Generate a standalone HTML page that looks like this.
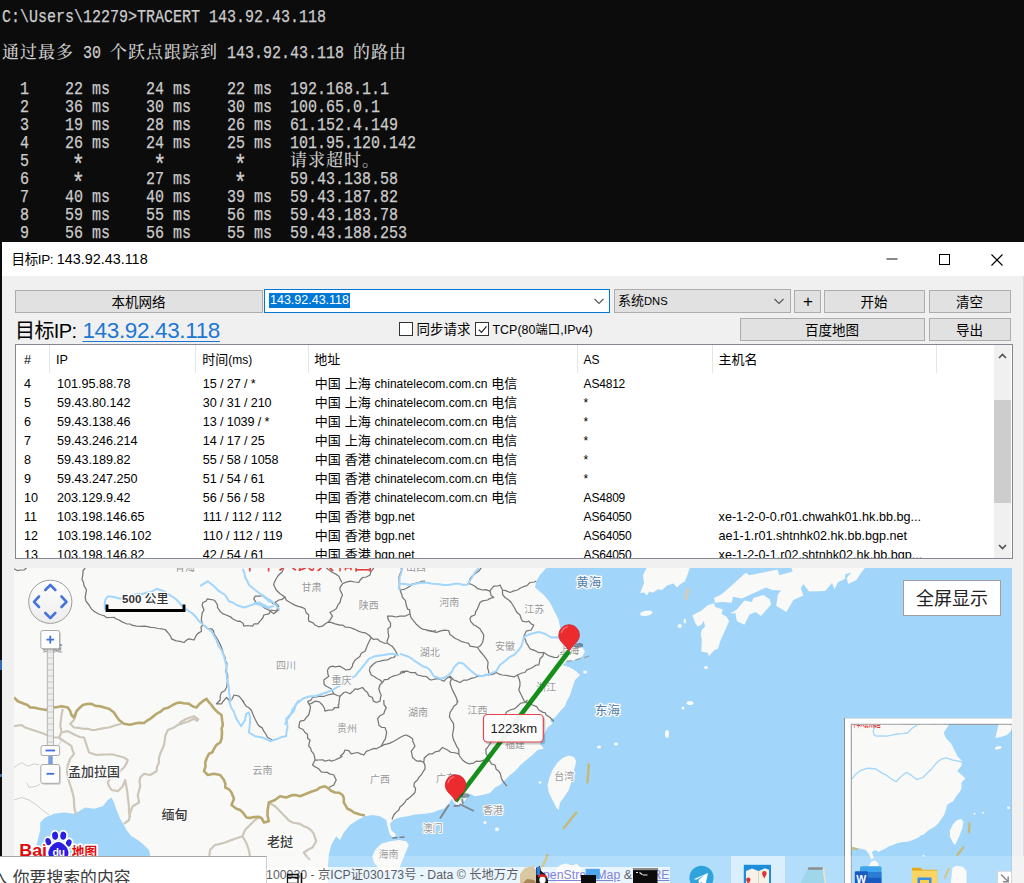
<!DOCTYPE html>
<html lang="zh-CN">
<head>
<meta charset="utf-8">
<title>目标IP: 143.92.43.118</title>
<style>
*{box-sizing:border-box;margin:0;padding:0}
html,body{width:1024px;height:883px;overflow:hidden;background:#0c0c0c}
body{position:relative;font-family:"Liberation Sans","Noto Sans CJK SC",sans-serif;color:#000}
.abs{position:absolute}
/* terminal */
#term{position:absolute;left:0;top:0;width:1024px;height:243px;background:#0c0c0c;overflow:hidden}
.tl{position:absolute;left:2px;height:18px;line-height:18px;white-space:pre;color:#cccccc;
  font-family:"Liberation Mono",monospace;font-size:19px;transform:scaleX(.78947);transform-origin:0 0;margin-top:1px;-webkit-text-stroke:.25px #ccc}
.tc{position:absolute;height:18px;line-height:18px;white-space:pre;color:#cccccc;
  font-family:"Noto Serif CJK SC","Noto Sans CJK SC",serif;font-size:17px;letter-spacing:1px;margin-top:-1px;font-weight:500}
.tl i{font-style:normal;display:inline-block;transform:translateY(4.6px) scale(1.45,1.4);transform-origin:50% 45%}
/* window */
#win{position:absolute;left:2px;top:242px;width:1022px;height:641px;background:#f0f0f0;overflow:hidden}
#tbar{position:absolute;left:0;top:0;width:1022px;height:34px;background:#fff}
#ttl{position:absolute;left:9.5px;top:7px;font-size:14.4px;line-height:20px;white-space:pre}
.btn{position:absolute;background:#e1e1e1;border:1px solid #adadad;text-align:center;font-size:13.5px;white-space:pre}
.btn{padding-top:2.4px;padding-right:1px}
#lv{position:absolute;left:13px;top:102px;width:998px;height:215px;border:1px solid #828790;background:#fff;overflow:hidden}
.hd{position:absolute;top:1px;height:28px;line-height:28px;font-size:12.6px;white-space:pre}
.sep{position:absolute;top:0;width:1px;height:28px;background:#e5e5e5}
.row{position:absolute;left:0;height:19px;line-height:19px;font-size:12.6px;width:976px;white-space:pre}
.row span{position:absolute;top:0}
.row .ad{font-size:12px;word-spacing:.6px;top:-1px}.row .ad b{font-weight:normal;font-size:13px}
.row .tm{letter-spacing:-.1px}.row .as{font-size:12px;letter-spacing:-.2px}
</style>
</head>
<body>
<div id="term">
<div class="tl" style="top:7px">C:\Users\12279&gt;TRACERT 143.92.43.118</div>
<div class="tl" style="top:43px">         30              143.92.43.118</div>
<div class="tl" style="top:79px">  1    22 ms    24 ms    22 ms  192.168.1.1</div>
<div class="tl" style="top:97px">  2    36 ms    30 ms    30 ms  100.65.0.1</div>
<div class="tl" style="top:115px">  3    19 ms    28 ms    26 ms  61.152.4.149</div>
<div class="tl" style="top:133px">  4    26 ms    24 ms    25 ms  101.95.120.142</div>
<div class="tl" style="top:151px">  5     <i>*</i>        <i>*</i>        <i>*</i></div>
<div class="tl" style="top:169px">  6     <i>*</i>       27 ms     <i>*</i>     59.43.138.58</div>
<div class="tl" style="top:187px">  7    40 ms    40 ms    39 ms  59.43.187.82</div>
<div class="tl" style="top:205px">  8    59 ms    55 ms    56 ms  59.43.183.78</div>
<div class="tl" style="top:223px">  9    56 ms    56 ms    55 ms  59.43.188.253</div>
<div class="tc" style="top:43px;left:2px">通过最多</div>
<div class="tc" style="top:43px;left:110px">个跃点跟踪到</div>
<div class="tc" style="top:43px;left:353px">的路由</div>
<div class="tc" style="top:151px;left:290px">请求超时。</div>
</div>

<div id="win">
 <div id="tbar">
  <div id="ttl"><span style="font-size:13.5px;letter-spacing:-.35px">目标IP: </span>143.92.43.118</div>
  <svg class="abs" style="left:860px;top:0" width="162" height="34" viewBox="0 0 162 34">
   <path d="M24.5 17h11" stroke="#111" stroke-width="1" fill="none"/>
   <rect x="77.5" y="12.5" width="10" height="10" stroke="#000" stroke-width="1" fill="none"/>
   <path d="M129.5 12.5l11 11M140.5 12.5l-11 11" stroke="#000" stroke-width="1.1" fill="none"/>
  </svg>
 </div>

 <!-- toolbar row 1 -->
 <div class="btn" style="left:13px;top:48px;width:248px;height:23px;line-height:20px">本机网络</div>
 <div class="abs" style="left:262px;top:47px;width:346px;height:24px;background:#fff;border:1px solid #0078d7"></div>
 <div class="abs" style="left:267px;top:50.5px;width:81px;height:15px;background:#0078d7;color:#fff;font-size:12.5px;line-height:15px;white-space:pre;padding-left:1px">143.92.43.118</div>
 <svg class="abs" style="left:590px;top:54px" width="14" height="10" viewBox="0 0 14 10"><path d="M2.5 3l4.5 4.5 4.5-4.5" stroke="#555" stroke-width="1.1" fill="none"/></svg>
 <div class="abs" style="left:612px;top:47px;width:177px;height:24px;background:#e1e1e1;border:1px solid #adadad;font-size:13px;line-height:22px;padding-left:3px;white-space:pre">系统<span style="font-size:11.2px">DNS</span></div>
 <svg class="abs" style="left:770px;top:54px" width="14" height="10" viewBox="0 0 14 10"><path d="M2.5 3l4.5 4.5 4.5-4.5" stroke="#555" stroke-width="1.1" fill="none"/></svg>
 <div class="btn" style="left:792px;top:48px;width:27px;height:23px;line-height:17px;font-size:17px;padding-left:2px">+</div>
 <div class="btn" style="left:822px;top:48px;width:101px;height:23px;line-height:20px">开始</div>
 <div class="btn" style="left:927px;top:48px;width:82px;height:23px;line-height:20px">清空</div>

 <!-- toolbar row 2 -->
 <div class="abs" style="left:13px;top:75px;height:28px;line-height:28px;font-size:22.5px;white-space:pre"><span style="font-size:20px;letter-spacing:-.6px">目标IP: </span><span style="color:#1c77d3;text-decoration:underline;text-decoration-thickness:1.3px;text-underline-offset:2.5px;letter-spacing:-.36px;margin-left:1px">143.92.43.118</span></div>
 <div class="abs" style="left:397px;top:80px;width:14px;height:14px;background:#fff;border:1px solid #333"></div>
 <div class="abs" style="left:414.5px;top:78px;font-size:13.5px;line-height:20px;white-space:pre">同步请求</div>
 <div class="abs" style="left:473px;top:80px;width:14px;height:14px;background:#fff;border:1px solid #333"></div>
 <svg class="abs" style="left:473.5px;top:80.5px" width="13" height="13" viewBox="0 0 13 13"><path d="M2.8 6.6l2.7 2.8 5-6" stroke="#222" stroke-width="1.2" fill="none"/></svg>
 <div class="abs" style="left:490.5px;top:78px;font-size:12.45px;line-height:20px;white-space:pre">TCP(80端口,IPv4)</div>
 <div class="btn" style="left:738px;top:76px;width:185px;height:23px;line-height:20px">百度地图</div>
 <div class="btn" style="left:927px;top:76px;width:82px;height:23px;line-height:20px">导出</div>

 <!-- list view -->
 <div id="lv">
  <div class="hd" style="left:8px">#</div>
  <div class="hd" style="left:40px">IP</div>
  <div class="hd" style="left:186.2px;font-size:13px">时间<span style="font-size:12px">(ms)</span></div>
  <div class="hd" style="left:298.2px;font-size:13px">地址</div>
  <div class="hd" style="left:567.6px;font-size:12px">AS</div>
  <div class="hd" style="left:702.5px;font-size:13px">主机名</div>
  <div class="sep" style="left:33px"></div><div class="sep" style="left:179px"></div><div class="sep" style="left:292px"></div>
  <div class="sep" style="left:561px"></div><div class="sep" style="left:696px"></div><div class="sep" style="left:920px"></div>
<div class="row" style="top:30px"><span style="left:8px">4</span><span style="left:41px">101.95.88.78</span><span class="tm" style="left:186.8px">15 / 27 / *</span><span class="ad" style="left:298.7px"><b>中国</b> <b>上海</b> chinatelecom.com.cn <b>电信</b></span><span class="as" style="left:567.6px">AS4812</span></div>
<div class="row" style="top:49px"><span style="left:8px">5</span><span style="left:41px">59.43.80.142</span><span class="tm" style="left:186.8px">30 / 31 / 210</span><span class="ad" style="left:298.7px"><b>中国</b> <b>上海</b> chinatelecom.com.cn <b>电信</b></span><span class="as" style="left:567.6px">*</span></div>
<div class="row" style="top:68px"><span style="left:8px">6</span><span style="left:41px">59.43.138.46</span><span class="tm" style="left:186.8px">13 / 1039 / *</span><span class="ad" style="left:298.7px"><b>中国</b> <b>上海</b> chinatelecom.com.cn <b>电信</b></span><span class="as" style="left:567.6px">*</span></div>
<div class="row" style="top:87px"><span style="left:8px">7</span><span style="left:41px">59.43.246.214</span><span class="tm" style="left:186.8px">14 / 17 / 25</span><span class="ad" style="left:298.7px"><b>中国</b> <b>上海</b> chinatelecom.com.cn <b>电信</b></span><span class="as" style="left:567.6px">*</span></div>
<div class="row" style="top:106px"><span style="left:8px">8</span><span style="left:41px">59.43.189.82</span><span class="tm" style="left:186.8px">55 / 58 / 1058</span><span class="ad" style="left:298.7px"><b>中国</b> <b>香港</b> chinatelecom.com.cn <b>电信</b></span><span class="as" style="left:567.6px">*</span></div>
<div class="row" style="top:125px"><span style="left:8px">9</span><span style="left:41px">59.43.247.250</span><span class="tm" style="left:186.8px">51 / 54 / 61</span><span class="ad" style="left:298.7px"><b>中国</b> <b>香港</b> chinatelecom.com.cn <b>电信</b></span><span class="as" style="left:567.6px">*</span></div>
<div class="row" style="top:144px"><span style="left:8px">10</span><span style="left:41px">203.129.9.42</span><span class="tm" style="left:186.8px">56 / 56 / 58</span><span class="ad" style="left:298.7px"><b>中国</b> <b>香港</b> chinatelecom.com.cn <b>电信</b></span><span class="as" style="left:567.6px">AS4809</span></div>
<div class="row" style="top:163px"><span style="left:8px">11</span><span style="left:41px">103.198.146.65</span><span class="tm" style="left:186.8px">111 / 112 / 112</span><span class="ad" style="left:298.7px"><b>中国</b> <b>香港</b> bgp.net</span><span class="as" style="left:567.6px">AS64050</span><span style="left:702.6px">xe-1-2-0-0.r01.chwahk01.hk.bb.bg...</span></div>
<div class="row" style="top:182px"><span style="left:8px">12</span><span style="left:41px">103.198.146.102</span><span class="tm" style="left:186.8px">110 / 112 / 119</span><span class="ad" style="left:298.7px"><b>中国</b> <b>香港</b> bgp.net</span><span class="as" style="left:567.6px">AS64050</span><span style="left:702.6px">ae1-1.r01.shtnhk02.hk.bb.bgp.net</span></div>
<div class="row" style="top:201px"><span style="left:8px">13</span><span style="left:41px">103.198.146.82</span><span class="tm" style="left:186.8px">42 / 54 / 61</span><span class="ad" style="left:298.7px"><b>中国</b> <b>香港</b> bgp.net</span><span class="as" style="left:567.6px">AS64050</span><span style="left:702.6px">xe-1-2-0-1.r02.shtnhk02.hk.bb.bgp...</span></div>
  <!-- scrollbar -->
  <div class="abs" style="left:977px;top:0;width:19px;height:213px;background:#fff"></div>
  <div class="abs" style="left:978px;top:0;width:17px;height:213px;background:#f0f0f0"></div>
  <div class="abs" style="left:978px;top:55px;width:17px;height:103px;background:#cdcdcd"></div>
  <svg class="abs" style="left:978px;top:3px" width="17" height="17" viewBox="0 0 17 17"><path d="M5 10l3.5-3.5 3.5 3.5" stroke="#505050" stroke-width="1.6" fill="none"/></svg>
  <svg class="abs" style="left:978px;top:193px" width="17" height="17" viewBox="0 0 17 17"><path d="M5 7l3.5 3.5 3.5-3.5" stroke="#505050" stroke-width="1.6" fill="none"/></svg>
 </div>

 <!-- map -->
 <div id="map" class="abs" style="left:12px;top:326px;width:998px;height:315px;overflow:hidden;background:#a1d6fa">
<svg class="abs" style="left:0;top:0" width="998" height="315" viewBox="14 568 998 315" font-family="'Liberation Sans','Noto Sans CJK SC',sans-serif">
<rect x="14" y="568" width="998" height="315" fill="#a1d6fa"/>
<path d="M14 568 L546.2 568 L540 575 L536.2 581.2 L535 587.5 L543.8 595 L550 602.5 L555 612.5 L558.8 620 L560 627.5 L563.8 633.8 L570 640 L575 645 L581.2 646.2 L585 651.2 L582.5 656.2 L575 660 L567.5 661.2 L562.5 665 L570 667.5 L576.2 671.2 L580 675 L575 680 L572.5 687.5 L570 695 L566.2 702.5 L565 706.2 L560 711.2 L555 717.5 L550 720 L552.5 723.8 L547.5 727.5 L543.8 735 L540 743.8 L543.8 748.8 L537.5 750 L532.5 755 L526.2 760 L520 765.5 L515 771.2 L510 775 L505 780 L500 785 L495 787.5 L490 793 L482.5 795 L475 796.2 L470 793.8 L466.2 798.8 L462.5 803.8 L457.5 805 L453.8 802.5 L451.8 798.8 L449.5 802.5 L447.5 805.5 L443.8 808.8 L438.8 810 L432.5 812.5 L425 813.8 L415 814.5 L407.5 816.2 L400 817.5 L393.8 819.5 L390 823.8 L391.2 830 L396.2 835 L393.8 837.5 L390 835 L387.5 826.2 L386.2 820 L380 816.2 L372.5 815 L365 816.2 L357.5 820 L350 825 L343.8 832.5 L340 840 L336.2 836.2 L331.2 845 L328.8 855 L328 865 L328 890 L14 900Z" fill="#f9f9f8"/>
<path d="M32.8 900 L35.2 850 L37.8 840 L40.2 830 L40.2 822.5 L45.2 817.5 L54 813.8 L64 812.5 L74 813.8 L79 811.2 L85.2 807.5 L94 808.8 L102.8 806.2 L107.8 800 L111.5 797.5 L114 802.5 L116.5 810 L120.2 818.8 L124 825 L126.5 830 L131.5 836.2 L137.8 840 L144 845 L149 850 L150.2 855 L149 900Z" fill="#a1d6fa"/>
<path d="M375 850 L381.2 843.8 L390 841.2 L398.8 840 L406.2 841.2 L408.8 845 L406.2 851.2 L402.5 860 L398.8 870 L382.5 872.5 L373.8 862.5 L372.5 856.2Z" fill="#f9f9f8"/>
<path d="M568.8 755.5 L573.8 757 L576.2 761.2 L574.5 768.8 L572.5 775 L571.2 782.5 L568.8 790 L563.8 797.5 L560 802.5 L558.8 810 L556.2 807.5 L552.5 800 L548.8 792.5 L547.5 785 L549.5 777.5 L552.5 770 L557.5 762.5 L562.5 758Z" fill="#f9f9f8"/>
<path d="M646.7 567.9 L642.9 575.2 L644.1 582.9 L641.6 589.2 L640.3 593 L644.1 592.5 L646.7 595.6 L649.2 591.7 L653 592.5 L658.1 589.2 L661.9 590 L667 585.4 L673.3 583.4 L677.1 587.4 L680.4 584.1 L684.8 581.6 L687.3 575.2 L689.8 567.9Z" fill="#f9f9f8"/>
<ellipse cx="646.2" cy="613.3" rx="6.3" ry="2.6" fill="#f9f9f8" transform="rotate(-10 646 613)"/>
<path d="M714 603.2 L707.6 605.2 L701.3 610.8 L696.2 613.3 L692.4 615.4 L694.9 622.2 L697.5 626.5 L701.3 624.8 L703.8 620.9 L705.1 626.5 L701.8 629.8 L700.8 634.9 L701.8 639.2 L701.3 651.4 L707.6 652.7 L708.9 656 L714.5 650.1 L717.8 648.9 L720.3 641.3 L724.1 632.4 L729.2 620.9 L726.7 617.1 L721.6 613.8 L722.8 609.5 L715.2 607Z" fill="#f9f9f8"/>
<path d="M714 598.1 L721.6 594.3 L731.7 585.4 L745.7 572.7 L749.5 575.2 L777.4 569.6 L779.5 575.2 L792.7 571.4 L791.4 567.9 L865 567.9 L861.2 572.7 L856.2 580.3 L848 584.1 L846.8 577.8 L851.1 572.7 L845.5 574 L844.7 579 L837.9 582.3 L834.6 589.2 L832 582.9 L825.2 591 L809.2 591.5 L803.3 584.1 L800.8 587.9 L803.3 595.6 L793.4 600.1 L786.3 612.1 L776.2 605.7 L777.9 594.3 L781.2 590.5 L772.4 590 L766 587.4 L758.4 591 L741.9 598.6 L733 596.8 L731.7 602.7 L722.8 601.9 L715.2 602.7Z" fill="#f9f9f8"/>
<path d="M730.5 613.3 L736.8 609.5 L744.4 600.6 L752 601.9 L753.3 598.1 L763.5 595 L769.8 599.4 L771.1 604.4 L760.9 615.9 L755.9 612.1 L749.5 614.6 L744.4 624.8 L736.8 620.9 L735.5 613.3Z" fill="#f9f9f8"/>
<ellipse cx="679.7" cy="626" rx="2" ry="2" fill="#f9f9f8"/>
<ellipse cx="684.8" cy="621" rx="1.25" ry="2.5" fill="#f9f9f8"/>
<ellipse cx="706" cy="667.5" rx="2" ry="1.5" fill="#f9f9f8"/>
<ellipse cx="690" cy="703" rx="3.5" ry="2" fill="#f9f9f8"/>
<ellipse cx="683" cy="708" rx="1.5" ry="1.5" fill="#f9f9f8"/>
<ellipse cx="667" cy="734" rx="2" ry="4" fill="#f9f9f8"/>
<ellipse cx="599" cy="747" rx="2" ry="1.5" fill="#f9f9f8"/>
<ellipse cx="616" cy="744" rx="2" ry="1.5" fill="#f9f9f8"/>
<ellipse cx="485" cy="822.5" rx="1.5" ry="1.5" fill="#f9f9f8"/>
<ellipse cx="497" cy="829.3" rx="2" ry="2" fill="#f9f9f8"/>
<ellipse cx="585" cy="672" rx="2" ry="1.5" fill="#f9f9f8"/>
<ellipse cx="540" cy="782.5" rx="1.25" ry="1.25" fill="#f9f9f8"/>
<rect x="685" y="588" width="3.5" height="12" fill="#cfcdbd" transform="rotate(14 686.5 594)"/>
<path d="M14 767.5 L21.5 762.5 L27.8 766.2 L34 763.8 L39 765" fill="none" stroke="#cfcfcf" stroke-width="1"/>
<path d="M26.5 782.5 L29 787.5 L36.5 786.2 L40.2 783.8" fill="none" stroke="#cfcfcf" stroke-width="1"/>
<path d="M14 800 L21.5 797.5 L29 800 L36.5 805 L44 811.2 L49 815" fill="none" stroke="#cfcfcf" stroke-width="1"/>
<path d="M57.8 737.5 L61.5 741.2 L57.8 746.2" fill="none" stroke="#cfcfcf" stroke-width="1"/>
<path d="M197.8 721.2 L194 718.8 L189 721.2 L181.5 723.8 L177.5 725.1 L174 727.5 L167.8 730 L165.2 736.2 L164.8 739.9 L164 745 L162.2 749.2 L160.2 753.8 L158.9 758.2 L159 762.5 L157 766.7 L156.5 771.2 L150.2 775 L144 773.8 L140.2 777.5 L139.5 781.2 L140.2 786.2 L138.9 791.1 L137.8 795 L139 802.5 L132.8 806.2 L130.2 812.5 L129 820 L124 823.8" fill="none" stroke="#cdc7ba" stroke-width="2.2" stroke-linejoin="round"/>
<path d="M61.5 732.5 L67.8 731.2 L70.9 732.7 L75.2 735 L79.8 737 L84 737.5 L86.5 745 L89 752.5 L96.5 755 L101.6 754.6 L106.5 754.5 L112.3 754.3 L116.5 755.5 L124 757.5 L127.8 760 L126.5 763.4 L124 767.5 L120.3 770.6 L117.8 775 L113.7 776.8 L110.2 777.5 L107.8 782.5 L109.1 786.4 L111.5 790 L117.8 791.2 L122.8 786.2 L125.2 780 L126.5 787.5 L127.4 792.3 L127.8 797.5 L128.5 801.8 L129 807.5 L128.9 812 L130.2 817.5" fill="none" stroke="#cdc7ba" stroke-width="2.2" stroke-linejoin="round"/>
<path d="M61.5 732.5 L59 737.5 L64 741.2 L68 743.6 L71.5 746.2 L72.5 750.1 L74 753.8 L70.2 758.8 L67.8 765 L67 771.2 L67.8 777.5 L70.2 785 L71.4 789.1 L72.8 793.8 L73.9 798.5 L74 802.5 L74.2 807 L75.2 811.2 L76 815" fill="none" stroke="#cdc7ba" stroke-width="2.2" stroke-linejoin="round"/>
<path d="M61.5 732.5 L60.2 725 L60.9 720.6 L61.5 715 L62.8 708.8" fill="none" stroke="#cdc7ba" stroke-width="2.2" stroke-linejoin="round"/>
<path d="M76.5 712.5 L74 720 L70.2 723.8 L74 727.5 L78.8 727.8 L82.8 728.8 L87.9 728.8 L91.5 730 L95.7 729.8 L100.2 728.8 L104 728.1 L109 727.5 L116.5 725 L121.5 723.8" fill="none" stroke="#cdc7ba" stroke-width="2.2" stroke-linejoin="round"/>
<path d="M14 726.2 L21.5 725 L24.5 727.2 L29 728.8 L36.5 731.2 L44 733.8 L48.2 735.8 L51.5 737.5 L59 737.5" fill="none" stroke="#cdc7ba" stroke-width="2.2" stroke-linejoin="round"/>
<path d="M260 816.2 L255 820 L250 825 L245 830 L242.5 836.2 L235 838.8 L230.6 840.4 L225 842.5 L220.3 843.9 L215 845 L210 850 L209.5 854.9 L208.8 860" fill="none" stroke="#cdc7ba" stroke-width="2.2" stroke-linejoin="round"/>
<path d="M242.5 836.2 L246.2 842.5 L248.8 850 L249.9 855.7 L250 860" fill="none" stroke="#cdc7ba" stroke-width="2.2" stroke-linejoin="round"/>
<path d="M268.8 802.5 L275 806.2 L280 811.2 L283.1 814.6 L286.2 817.5 L288.6 820.3 L292.5 822.5 L300 823.8 L304 826.4 L307.5 827.5 L311.2 830.3 L313.8 833.8 L316.2 841.2 L312.5 847.5 L307.5 850 L303.8 852.5 L306.7 856.5 L310 860" fill="none" stroke="#cdc7ba" stroke-width="2.2" stroke-linejoin="round"/>
<path d="M199 720 L194 716.2 L186.5 718.8 L182 721.2 L179 723.8" fill="none" stroke="#cdc7ba" stroke-width="2.2" stroke-linejoin="round"/>
<path d="M85.2 568 L83.1 570.5 L82.8 575 L82 579.4 L83.5 582.5 L84 585.6 L86.5 590 L85.6 594.7 L85.2 597.5 L86 601.1 L89 605 L91.6 609.1 L94 611.2 L98.6 614 L101.5 615 L103.8 615.6 L106.9 617.7 L110.2 617.5 L114.3 617.4 L115.2 618.5 L119 620 L122.1 621.9 L126.5 623.8 L130.1 624 L131.9 625.2 L136.5 626.2 L140.5 626.4 L145.2 626.2 L150.8 627.3 L154 627.5 L157.8 628.5 L161.5 628.8 L165.1 629.5 L167.8 632.5 L170.7 636.4 L171.5 638.8 L176.2 640.8 L179 641.2 L184 642.5 L186.2 640.4 L189 638.8 L194 640 L196.5 635 L198 633.4 L201.5 631.2 L201 627 L202.8 625 L201.4 620.4 L201.5 617.5 L202.3 612.6 L204 610 L202.1 605.3 L202.8 602.5" fill="none" stroke="#777777" stroke-width="1.25" stroke-linejoin="round"/>
<path d="M202.8 625 L204.7 625.9 L207.4 628.5 L211.5 628.8 L213.5 630.8 L214.2 634.2 L216.5 637.5 L217.8 639.9 L220.7 645.4 L221.5 647.5 L222.6 650.8 L222.9 653.1 L225.2 657.5 L225.2 660.2 L226.9 663.3 L226.5 667.5 L225.7 672 L227.4 673.2 L227.8 677.5 L227.5 679.6 L227 685.4 L226.5 687.5 L224.9 690.5 L221.5 692.5 L220.2 695.9 L220.2 700 L216.5 703.8 L221.5 703.8 L223.1 701.4 L226.5 697.5 L230.2 701.2 L232.2 698.8 L234 695 L239 696.2 L241.1 698.6 L244 702.5" fill="none" stroke="#777777" stroke-width="1.25" stroke-linejoin="round"/>
<path d="M14 568.8 L17.9 570.7 L20.2 570 L24.3 569.8 L26.5 568" fill="none" stroke="#777777" stroke-width="1.25" stroke-linejoin="round"/>
<path d="M202.5 602.5 L205.8 601.3 L207.5 598.8 L209.9 599.4 L213.8 600 L215.3 601.3 L217.5 605 L217.5 607.5 L220 611.2 L222.5 613.6 L226.2 615 L230.5 616.8 L232.5 618.8 L237.4 621.3 L240 621.2 L243.1 623.3 L243.8 626.2 L247.4 625.5 L252.5 626.2 L254.2 623.8 L257.8 623.9 L260 621.2 L262.8 618 L263.8 615 L268.8 613.8 L271.2 610 L276.2 611.2 L278.8 606.2 L275 602.5 L278.8 600 L282.3 599.3 L285 597 L286.4 600.2 L290 602.5 L294.8 605.1 L297.5 606.2 L301.9 607.4 L305 608.8 L306.1 612.7 L308.8 615 L308.4 618.9 L308.8 621.2 L313.1 622.8 L315 625 L318.5 626.8 L322.5 626.2 L325.6 623.5 L327.5 622.5 L330.3 622.2 L335 623.8 L339.8 625.2 L342.5 625 L345.3 627.1 L350 627.5 L354.3 629.2 L356.2 630 L359 631.4 L362.5 632.5 L364.7 632.5 L368.8 635 L371.2 637.5" fill="none" stroke="#777777" stroke-width="1.25" stroke-linejoin="round"/>
<path d="M255 596.2 L260 596.2 L262.5 595.5 L266.3 598.9 L270 600 L272.9 603.5 L276.2 605 L278.8 610 L277.1 611.1 L273.8 613.8 L270.7 611.4 L268.8 610 L265 608.3 L262.5 606.2 L258.7 604.1 L256.2 602.5 L253.8 598.8 L255 596.2" fill="none" stroke="#777777" stroke-width="1.25" stroke-linejoin="round"/>
<path d="M285 597 L280 593.8 L276.2 590 L273.8 585 L274 583 L276.2 578.8 L277.7 576.2 L280 573.8 L282.1 572 L283.8 568" fill="none" stroke="#777777" stroke-width="1.25" stroke-linejoin="round"/>
<path d="M327.5 622.5 L329.8 620.4 L332.5 616.2 L330 612.5 L333.1 610.7 L336.2 608.8 L338.2 604.4 L340 602.5 L341.1 597.9 L342.5 595 L340 590 L340 587.7 L342.5 583.8 L345.4 582.4 L350 581.2 L355 582 L358.8 582.5 L360.2 580 L362.5 577.5 L366.4 577 L370 575 L370.9 571.7 L373.8 568" fill="none" stroke="#777777" stroke-width="1.25" stroke-linejoin="round"/>
<path d="M326.2 568 L328.7 569.7 L332.5 572.5 L336.4 574.4 L338.8 576.2 L340.6 580 L342 582.5" fill="none" stroke="#777777" stroke-width="1.25" stroke-linejoin="round"/>
<path d="M401.2 568 L401.5 571 L399.9 574.3 L398.8 577.5 L399.1 581.1 L399.3 583.8 L399.6 588 L400 590 L401.8 594.7 L402.5 597.5 L405.5 600.6 L406.2 605 L407.6 609.1 L409.6 609.9 L410 613.8 L410.9 617.3 L413.8 621.2 L415.8 623.7 L420 627.5 L422.6 629.2 L427.5 630 L432.5 631.3 L436 630.5" fill="none" stroke="#777777" stroke-width="1.25" stroke-linejoin="round"/>
<path d="M371.2 637.5 L373.2 639.3 L377.5 639 L380 641.2 L384.5 643.3 L387 643 L387.2 640.8 L388.8 636.2 L388.1 632.5 L388 628.8 L390.5 626.8 L390.5 623 L388.1 619.4 L387.5 616.2 L391.9 616.2 L396.2 617 L399.8 616.1 L405 616.2 L410 613.8" fill="none" stroke="#777777" stroke-width="1.25" stroke-linejoin="round"/>
<path d="M371.2 637.5 L369.9 640 L367.5 645 L366.4 647.9 L365 651.2 L361.2 653.3 L360 656.2 L357.8 658.1 L355 660 L352.6 664.4 L352.5 666.2 L350.1 669.3 L346.2 670 L342.1 667.5 L340 666.2 L335.1 666.9 L332.5 666.2 L329.4 667.1 L327.5 670 L327.9 674.2 L328.8 676.2 L327.1 677.5 L323.8 680 L324.1 684.2 L326.2 686.2 L331.2 688.8 L333.8 693.8 L337.1 695.5 L340 696.2 L343.8 692.5 L345.8 692 L350 693.8 L353 691.1 L355 688.8 L357.6 689.3 L362.5 687.5 L365.3 690.8 L367.5 692.5 L368.9 695.9 L372.5 697.5 L373.2 700.9 L376.2 702.5 L380 701.2 L380.5 697.7 L381.2 695 L380.1 693 L378.8 688.8 L380 684.7 L382.5 682.5 L380.1 680 L377.5 678.8 L373.3 676 L371.2 675 L369.4 670.5 L370 667.5 L373.8 663.8 L376.4 662 L380 661.2 L384.4 660.1 L387.5 660 L390.7 657.9 L393.8 657.5 L397 653.8 L395 650 L392.1 646.2 L390 645 L387 643" fill="none" stroke="#777777" stroke-width="1.25" stroke-linejoin="round"/>
<path d="M382.5 682.5 L384.4 679.6 L388.1 679.3 L390 677.5 L392.9 676.2 L397.5 675 L402.4 672.7 L405 672.5" fill="none" stroke="#777777" stroke-width="1.25" stroke-linejoin="round"/>
<path d="M333.8 693.8 L331.5 694.2 L327.5 695 L323.7 696.5 L320 696.2 L316 696.9 L312.5 697.5 L310.5 700.6 L307.5 701.2" fill="none" stroke="#777777" stroke-width="1.25" stroke-linejoin="round"/>
<path d="M340 696.2 L339 701.5 L338.8 705" fill="none" stroke="#777777" stroke-width="1.25" stroke-linejoin="round"/>
<path d="M481.2 568 L478.6 571.3 L475 573.8 L472.3 575.9 L470 578.8 L468.8 583.8 L470.7 584 L475 586.2 L477.6 588.7 L482.5 590 L485.6 589.7 L490 591.2 L490.8 589.6 L493.8 586.2 L497.9 586 L500 585 L502.5 590 L505.7 590.6 L510 592.5 L513.2 591.1 L517.5 590 L520.4 588 L525 586.2 L526.9 585.6 L530 582.5 L534.3 582 L536.2 581.2" fill="none" stroke="#777777" stroke-width="1.25" stroke-linejoin="round"/>
<path d="M490 591.2 L491.2 595.6 L493.8 597.5 L490.2 598.4 L487.5 600 L482.5 600.9 L480 602.5 L478.7 605.7 L477.5 608.8 L475.5 611.9 L475 615 L471.2 616.3 L470 618.8 L470.8 621.6 L473.8 625 L475.7 625.7 L480 628.8 L481.4 631.2 L483.8 635 L483.4 638.8 L482.5 642.5 L480.7 645.4 L477.5 647.5 L479.9 651 L481.2 652.5 L483.4 655.2 L486.2 658.8 L488.1 662.2 L487.5 667.5 L488.7 671.6 L488.8 675" fill="none" stroke="#777777" stroke-width="1.25" stroke-linejoin="round"/>
<path d="M502.5 590 L502.6 594.6 L505 597.5 L509.1 600.3 L511.2 602.5 L513.7 606.5 L515 608.8 L516.6 612 L520 615 L521.3 619 L522.5 621.2 L526.4 622 L528.8 621.2 L531.5 624.1 L533.8 625 L531.2 630 L526.2 631.2 L523.8 636.2 L525.5 639.9 L526.2 642.5 L527.4 644.4 L530 648.8 L532.1 649.6 L536.2 651.2 L539 652.7 L543.8 652.5 L547.1 654.7 L550 656.2 L554.1 657.3 L557.5 657.5 L560.6 653.1 L563.8 651.2" fill="none" stroke="#777777" stroke-width="1.25" stroke-linejoin="round"/>
<path d="M543.8 652.5 L542.7 656.3 L540 658.8 L539.4 662 L538.8 665 L536.1 665.1 L532.5 667.5 L530.6 668.5 L526.4 670.2 L525 672.5 L521.8 673 L517.5 675 L514.4 676.8 L510 676.2 L506.2 675.3 L502.5 675 L499.3 674.2 L496.2 672.5 L493.2 674.1 L488.8 675 L486 674.5 L482.5 676.2 L477.8 676.2 L475 677.5 L471.9 678.2 L467.5 680 L463.9 680 L460 682.5 L455.8 680.6 L453.8 680 L450 676.2" fill="none" stroke="#777777" stroke-width="1.25" stroke-linejoin="round"/>
<path d="M517.5 675 L519.2 679.2 L520 682.5 L519.9 685.7 L518.8 690 L520.7 693.7 L522.5 697.5 L525 702.5" fill="none" stroke="#777777" stroke-width="1.25" stroke-linejoin="round"/>
<path d="M525 702.5 L528.7 702.8 L532.5 705 L536.7 706.7 L538.8 710 L543.1 712.4 L545 712.5 L546.2 714.9 L550 717.5 L553.8 721.2" fill="none" stroke="#777777" stroke-width="1.25" stroke-linejoin="round"/>
<path d="M426.2 630.5 L431.2 631.2 L436.4 632.4 L440 631.2 L444.3 630.2 L448.8 630.5 L449.9 634.5 L452.5 636.2 L454.9 638.3 L458.8 640 L461 641.3 L465 642.5 L468.7 643.4 L470 646.2 L474.6 646.9 L477.5 647.5" fill="none" stroke="#777777" stroke-width="1.25" stroke-linejoin="round"/>
<path d="M400 590 L404.3 589.3 L406 588.5 L410 586.2 L412.9 583.7 L414.6 583.7 L418.8 582.5 L421.8 581.3 L425 581.2" fill="none" stroke="#777777" stroke-width="1.25" stroke-linejoin="round"/>
<path d="M400 672.5 L402.8 671.4 L407.5 671.2 L410.8 672.7 L415 672.5 L417.5 675 L422.5 676.2 L426.3 676.5 L429.4 679.3 L431.2 680 L436 678.9 L438.8 678.8 L443.8 681.2 L446.6 678.4 L450 676.2 L451.3 679.6 L450 682.5 L450.9 686.1 L452.5 690 L453.8 692.6 L456.2 697.5 L458 702.5" fill="none" stroke="#777777" stroke-width="1.25" stroke-linejoin="round"/>
<path d="M383.8 700 L384 704.6 L386.2 707.5 L384.4 711.8 L383.8 713.8 L380 715.7 L377.5 718.8 L378.2 721.1 L378.8 725 L381.6 727.4 L385 727.5 L386.6 732.1 L386.2 735 L385.3 739.2 L383.8 741.2 L381.2 746.2" fill="none" stroke="#777777" stroke-width="1.25" stroke-linejoin="round"/>
<path d="M340 756.2 L343.6 753.2 L345 750 L348.7 750.7 L351.2 753.8 L355 753 L357.5 752.5 L361.3 754.1 L363.8 755 L366.3 751.3 L370 750 L374.2 748.4 L376.2 748.8 L381.2 746.2 L384.3 744.6 L387.5 743.8 L390.1 743.1 L393.8 741.2 L398.1 738.7 L400 737.5 L403.5 735.7 L406.2 735 L409.5 736.6 L412.5 738.8 L412.9 741.6 L415 746.2 L412.3 749.8 L411.2 751.2 L411.8 753.6 L412.5 757.5 L416.1 760.6 L417.5 761.2 L420.5 760.9 L423.8 762.5 L424.2 758.3 L426.2 756.2 L428.9 753.9 L432.5 753.8 L435 751.9 L438.8 751.2 L442.5 747.5 L447.5 750 L450.8 752.3 L453.8 752.5 L458.8 753.8" fill="none" stroke="#777777" stroke-width="1.25" stroke-linejoin="round"/>
<path d="M423.8 762.5 L425 765.4 L425 768.8 L422.9 772 L421.2 775 L419 777.1 L417.5 780 L414.5 782.5 L413.8 786.2 L415.6 788.4 L415 792.5 L411.2 796.2 L408.7 798.4 L406.2 800 L405.3 801.8 L402.5 805 L400.1 806.8 L398.8 810 L396 812.4 L393.8 815 L392 819.5" fill="none" stroke="#777777" stroke-width="1.25" stroke-linejoin="round"/>
<path d="M457.5 700 L456.8 704 L453.8 706.2 L452.9 708.1 L450 712.5 L449.4 716.8 L451.2 720 L453.5 723.7 L453.8 727.5 L453.4 730 L452.5 735 L453.5 739.9 L455 742.5 L457.1 747.2 L458.8 749.4 L458.8 753.8 L459.6 756 L462.5 760 L465.7 762.4 L468.8 763.8 L473.6 763.1 L476.2 761.2 L480.4 761.3 L483.8 760 L486.8 760.7 L490 761.2" fill="none" stroke="#777777" stroke-width="1.25" stroke-linejoin="round"/>
<path d="M490 761.2 L491.3 763.8 L495 765 L496.2 769.2 L498.8 771.2 L500.4 773.8 L501.2 777.5 L502.1 780 L505 783.8 L507 786.2" fill="none" stroke="#777777" stroke-width="1.25" stroke-linejoin="round"/>
<path d="M490 761.2 L488.5 758 L486.2 753.8 L485.8 749.5 L487.5 747.5 L490 743.8 L491.7 741.1 L493 737.2 L495 735 L496.9 730.4 L497.8 728.2 L500 725 L502.9 722 L504.3 718.3 L505 715 L506.8 711.8 L510 710 L514.9 708.6 L517.5 706.2 L520.7 703.1 L525 702.5 L527.5 700" fill="none" stroke="#777777" stroke-width="1.25" stroke-linejoin="round"/>
<path d="M242.5 700 L244.3 703.6 L246.2 706.2 L248.5 707.5 L251.2 710 L252.9 714.2 L253.8 716.2 L254.9 718.8 L257.5 723.8 L259.2 726.1 L262.2 727.9 L263.8 731.2 L266.4 735 L267.5 737.5 L272.5 740" fill="none" stroke="#777777" stroke-width="1.25" stroke-linejoin="round"/>
<path d="M300 721.2 L299.4 723.6 L298.8 727.5 L303.1 729.5 L305 732.5 L307.5 734.3 L307.6 738.2 L310 740 L308.9 744.3 L308.8 746.2 L310.5 747.9 L311.4 751.1 L313.8 753.8 L314.8 758.1 L315 760 L312.5 765 L314.7 766.6 L318.8 768.8 L321.2 771.9 L325 772.5 L327 772.2 L329.7 773.9 L333.8 775 L336.2 780 L333.8 785 L328.8 787.5" fill="none" stroke="#777777" stroke-width="1.25" stroke-linejoin="round"/>
<path d="M300 721.2 L304.1 720.3 L306.2 717.5 L308.7 715 L310 710 L310.5 706.5 L308.8 703.8 L307.5 701.2" fill="none" stroke="#777777" stroke-width="1.25" stroke-linejoin="round"/>
<path d="M308.8 703.8 L311.1 703.6 L315 701.2 L319.4 701.9 L322.5 705 L324.2 707.8 L325 711.2 L328.4 710.2 L332.5 710 L334.8 707.5 L338.8 707.5 L338 704.5" fill="none" stroke="#777777" stroke-width="1.25" stroke-linejoin="round"/>
<path d="M315 760 L317.8 760 L322.9 759.8 L325 761.2 L329.5 760 L331.3 761.2 L335 760 L339.6 757.9 L342.5 756.2" fill="none" stroke="#777777" stroke-width="1.25" stroke-linejoin="round"/>
<path d="M105.2 610 L104.6 605 L105.2 600 L107.8 596.2 L114 597 L120.2 598.8 L124.6 598.1 L129 596.1 L134 595 L138.6 593.7 L142 594.2 L146.5 592.5 L150.2 592.5 L156.5 588.8 L164 591.2 L167.1 593.1 L171.5 596.2 L175.8 599 L179 602.5 L182.4 606.2 L185.2 608.8 L188.8 611 L192.8 613.8 L196.5 617.7 L199 621.2 L205.2 626.2 L208 629 L211.5 631.2 L213.7 635.3 L216.5 640 L218.3 645.4 L221.5 650 L223.9 655.8 L225.2 661.2 L226.5 666.2 L226.5 672.5 L226.8 677.5 L227.8 682.5 L229 688.1 L229 692.5 L229.8 696.5 L231 701.2" fill="none" stroke="#a3d6fb" stroke-width="2" stroke-linejoin="round"/>
<path d="M200.2 586.2 L203.9 583.7 L207.8 581.2 L214 586.2 L219 591.2 L225.2 595 L229 601.2 L233.3 602.7 L236.5 605 L244 607.5 L251.5 605 L259 602.5 L263.2 604.7 L266.5 606.2 L270 608.8" fill="none" stroke="#a3d6fb" stroke-width="2" stroke-linejoin="round"/>
<path d="M242.8 568.8 L244.5 573.5 L245.2 577.5 L247.3 581 L249 585 L255.2 590 L258.1 592.3 L261.5 595 L265 596.9 L267.8 600 L270 602.5" fill="none" stroke="#a3d6fb" stroke-width="2" stroke-linejoin="round"/>
<path d="M253.8 602.5 L260 605 L267.5 607.5 L273.8 606.2" fill="none" stroke="#a3d6fb" stroke-width="2" stroke-linejoin="round"/>
<path d="M262.5 595 L265.8 597.9 L270 600 L276.2 605 L279.5 610" fill="none" stroke="#a3d6fb" stroke-width="2" stroke-linejoin="round"/>
<path d="M285 725 L286.5 720.6 L288.8 717.5 L290.6 714.4 L293.8 711.2 L296.2 703.8 L299.1 702 L302.5 698.8 L310 696.2 L314.9 696.3 L318.8 695 L326.2 692.5 L332.5 690 L338.8 686.2 L342.2 683.1 L346.2 681.2 L350 678.7 L355 676.2 L360 670 L365 663.8 L368.8 658.8 L375 656.2 L379.7 655.5 L383.8 655 L387.8 654.3 L392.5 653.8 L399 655.5" fill="none" stroke="#a3d6fb" stroke-width="2" stroke-linejoin="round"/>
<path d="M402.5 568 L401.2 573 L399.5 577.5 L399.5 583.6 L398.8 588.8 L400.5 590" fill="none" stroke="#a3d6fb" stroke-width="2" stroke-linejoin="round"/>
<path d="M400 583.8 L405.2 583.9 L410 585 L414.6 583.9 L418.4 583.2 L422.5 582.5 L427.8 582.7 L432.5 583.8 L437.8 584 L443.8 585 L448.9 584.9 L455 583.8 L459.3 583.8 L463.2 585 L467.5 584.5 L471.2 578.8 L475 572.5 L478.8 568" fill="none" stroke="#a3d6fb" stroke-width="2" stroke-linejoin="round"/>
<path d="M400 653.8 L407.5 656.2 L411.3 658.3 L415 661.2 L419.2 663.9 L422.5 666.2 L426.9 667.5 L430 670 L433.8 676.2 L441.2 678.8 L445 677.3 L448.8 675 L451.8 671.8 L453.8 667.5 L458.8 662.5 L463.8 663.8 L466.3 666.6 L470 670 L476.2 675 L482.5 676.2 L490 673.8 L496.2 671.2 L500 665 L506.2 660 L509.5 657.1 L513.8 655 L518.8 650 L521.3 646.4 L522.5 642.5 L523.8 637.5 L525 636.2 L531.2 633.8 L538.8 632 L545 633.8 L551.2 637.5 L556.2 637.3 L560 637.5 L566.2 640" fill="none" stroke="#a3d6fb" stroke-width="2" stroke-linejoin="round"/>
<path d="M228.8 700 L231.2 707.5 L233.6 711.2 L235 715 L236.6 719.1 L238.8 722.5 L241.2 726.2 L245 720 L246.2 713.8 L248.8 712.5 L250 716.9 L250 722.5 L249.5 727.7 L248.8 732.5 L255 736.2 L262.5 737.5 L265.9 739.2 L270 741.2 L277.5 738.8 L281.3 737.1 L286.2 736.2 L286.5 732 L287.5 727.5 L287.1 722.7 L286.2 718.8 L291.2 713.8 L292.4 709.8 L295 706.2 L298.8 700" fill="none" stroke="#a3d6fb" stroke-width="2" stroke-linejoin="round"/>
<path d="M14 697.5 L17.8 701.2 L24 703.8 L27.5 705 L30.2 707.5 L34.2 707.6 L39 708.8 L43.3 709.5 L46.5 710 L49.4 708 L54 707.5 L57.5 707 L61.5 706.2 L67.8 707.5 L69.9 710.4 L71.5 715 L74 717.5 L76.5 711.2 L79 708.5 L82.8 705 L87 704 L91.5 703.8 L95.5 705.9 L100.2 706.2 L104.2 707.6 L109 708.8 L114 712.5 L116.2 716.1 L119 720 L124 723.8 L129.7 724.8 L134 723.8 L138.7 722.8 L144 723 L147.6 720.3 L150.2 718.8 L152.4 717.1 L156.5 713.8 L160.1 711.9 L164 708.8 L168.2 707.7 L172.8 705 L176.4 703.1 L180.2 702.5 L183.6 703.3 L189 703.8 L193 706.5 L196.5 707.5 L198.8 704.6 L202.8 701.2 L206.5 698.8 L208.7 701.9 L211.5 705 L213.3 707.7 L216.5 711.2 L221.5 715 L222.2 720.9 L222.8 725 L221.6 728.7 L222 732.5 L221.7 738.4 L220.2 742.5 L216.5 744.9 L214 748.8 L212.4 752.3 L209 753.8 L207.1 757.3 L205.2 762.5 L205.5 766.6 L204 771.2 L207.8 775 L214 773.8 L220.2 775 L224 780 L225.4 784 L225.2 787.5 L229 789.3 L231.5 792.5 L234 798.8 L231.5 805 L236.5 808.8 L240.2 810.1 L242.8 812.5 L246.5 817.5 L250.1 817.9 L254 817 L258.4 816.9 L261.5 818 L264 822.5 L268.8 821.2 L267.6 816 L267.5 811.2 L268.2 806.6 L268.8 802.5 L275 800 L280 796.2 L286.2 797.5 L292.5 795 L295.5 795.1 L300 796.2 L306.2 793.8 L312.5 791.2 L316.7 790.1 L320 787.5 L325 786.2 L328.8 788.8 L331 790.8 L335 792.5 L339.3 792.8 L342.5 795 L343.8 798 L343.8 802.5 L345.8 805.8 L347.5 808.8 L350.9 810.3 L353.8 812.5 L360 814.5 L365 815.5" fill="none" stroke="#b8a86e" stroke-width="2.6" stroke-linejoin="round"/>
<path d="M588.8 764.5 L587.5 782.5" stroke="#c9b873" stroke-width="2.4" stroke-linecap="round"/>
<path d="M576.3 812.5 L563.8 828" stroke="#c9b873" stroke-width="2.4" stroke-linecap="round"/>
<path d="M547.5 855 L542 868" stroke="#c9b873" stroke-width="2.4" stroke-linecap="round"/>
<path d="M566.3 661.5 L575 660.2 L583 658 L590.6 655.6" stroke="#98a4ad" stroke-width="1.3" stroke-dasharray="5.5 3.5" fill="none"/>
<path d="M449 804.7 L440 818.4" stroke="#7f868b" stroke-width="1.9"/>
<path d="M453.8 806 L460 805.6 M459.7 804 L473.8 811 M462 798.8 L463 803.8" stroke="#7f868b" stroke-width="1.8" fill="none"/>
<path d="M392.5 838 L404.5 837" stroke="#777" stroke-width="1.3" stroke-dasharray="5 2"/>
<text x="306.5" y="569.3" font-size="22" fill="#e23b3b" text-anchor="middle" textLength="132" lengthAdjust="spacingAndGlyphs">中华人民共和国</text>
<text x="311.5" y="591" font-size="10" fill="#999999" font-weight="400" text-anchor="middle" stroke="#fcfcfc" stroke-width="2" stroke-linejoin="round" paint-order="stroke">甘肃</text>
<text x="368.7" y="608.5" font-size="10" fill="#999999" font-weight="400" text-anchor="middle" stroke="#fcfcfc" stroke-width="2" stroke-linejoin="round" paint-order="stroke">陕西</text>
<text x="449.3" y="606" font-size="10" fill="#999999" font-weight="400" text-anchor="middle" stroke="#fcfcfc" stroke-width="2" stroke-linejoin="round" paint-order="stroke">河南</text>
<text x="505" y="650" font-size="10" fill="#999999" font-weight="400" text-anchor="middle" stroke="#fcfcfc" stroke-width="2" stroke-linejoin="round" paint-order="stroke">安徽</text>
<text x="429.7" y="655.7" font-size="10" fill="#999999" font-weight="400" text-anchor="middle" stroke="#fcfcfc" stroke-width="2" stroke-linejoin="round" paint-order="stroke">湖北</text>
<text x="286" y="669" font-size="10" fill="#999999" font-weight="400" text-anchor="middle" stroke="#fcfcfc" stroke-width="2" stroke-linejoin="round" paint-order="stroke">四川</text>
<text x="341.5" y="684" font-size="10" fill="#999999" font-weight="400" text-anchor="middle" stroke="#fcfcfc" stroke-width="2" stroke-linejoin="round" paint-order="stroke">重庆</text>
<text x="418" y="716" font-size="10" fill="#999999" font-weight="400" text-anchor="middle" stroke="#fcfcfc" stroke-width="2" stroke-linejoin="round" paint-order="stroke">湖南</text>
<text x="477.5" y="714.3" font-size="10" fill="#999999" font-weight="400" text-anchor="middle" stroke="#fcfcfc" stroke-width="2" stroke-linejoin="round" paint-order="stroke">江西</text>
<text x="534.3" y="613.3" font-size="10" fill="#999999" font-weight="400" text-anchor="middle" stroke="#fcfcfc" stroke-width="2" stroke-linejoin="round" paint-order="stroke">江苏</text>
<text x="546.3" y="691.3" font-size="10" fill="#999999" font-weight="400" text-anchor="middle" stroke="#fcfcfc" stroke-width="2" stroke-linejoin="round" paint-order="stroke">浙江</text>
<text x="347" y="731.8" font-size="10" fill="#999999" font-weight="400" text-anchor="middle" stroke="#fcfcfc" stroke-width="2" stroke-linejoin="round" paint-order="stroke">贵州</text>
<text x="262.5" y="773.8" font-size="10" fill="#999999" font-weight="400" text-anchor="middle" stroke="#fcfcfc" stroke-width="2" stroke-linejoin="round" paint-order="stroke">云南</text>
<text x="380" y="782.5" font-size="10" fill="#999999" font-weight="400" text-anchor="middle" stroke="#fcfcfc" stroke-width="2" stroke-linejoin="round" paint-order="stroke">广西</text>
<text x="446" y="781.5" font-size="10" fill="#999999" font-weight="400" text-anchor="middle" stroke="#fcfcfc" stroke-width="2" stroke-linejoin="round" paint-order="stroke">广东</text>
<text x="515" y="748" font-size="10" fill="#999999" font-weight="400" text-anchor="middle" stroke="#fcfcfc" stroke-width="2" stroke-linejoin="round" paint-order="stroke">福建</text>
<text x="564.3" y="779.5" font-size="10" fill="#999999" font-weight="400" text-anchor="middle" stroke="#fcfcfc" stroke-width="2" stroke-linejoin="round" paint-order="stroke">台湾</text>
<text x="493" y="813.5" font-size="10" fill="#999999" font-weight="400" text-anchor="middle" stroke="#fcfcfc" stroke-width="2" stroke-linejoin="round" paint-order="stroke">香港</text>
<text x="432.5" y="832" font-size="10" fill="#999999" font-weight="400" text-anchor="middle" stroke="#fcfcfc" stroke-width="2" stroke-linejoin="round" paint-order="stroke">澳门</text>
<text x="388.5" y="858" font-size="10" fill="#999999" font-weight="400" text-anchor="middle" stroke="#fcfcfc" stroke-width="2" stroke-linejoin="round" paint-order="stroke">海南</text>
<text x="569.3" y="654.3" font-size="10" fill="#999999" font-weight="400" text-anchor="middle" stroke="#fcfcfc" stroke-width="2" stroke-linejoin="round" paint-order="stroke">上海</text>
<text x="185" y="571" font-size="10" fill="#999999" font-weight="400" text-anchor="middle" stroke="#fcfcfc" stroke-width="2" stroke-linejoin="round" paint-order="stroke">青海</text>
<text x="52.5" y="651.5" font-size="10" fill="#999999" font-weight="400" text-anchor="middle" stroke="#fcfcfc" stroke-width="2" stroke-linejoin="round" paint-order="stroke">西藏</text>
<text x="416" y="571" font-size="10" fill="#999999" font-weight="400" text-anchor="middle" stroke="#fcfcfc" stroke-width="2" stroke-linejoin="round" paint-order="stroke">山西</text>
<text x="588.8" y="587" font-size="12.5" fill="#4f7cab" font-weight="400" text-anchor="middle" stroke="#fcfcfc" stroke-width="2.6" stroke-linejoin="round" paint-order="stroke">黄海</text>
<text x="607.6" y="714.5" font-size="12.5" fill="#4f7cab" font-weight="400" text-anchor="middle" stroke="#fcfcfc" stroke-width="2.6" stroke-linejoin="round" paint-order="stroke">东海</text>
<text x="94" y="775.5" font-size="13" fill="#3c3c3c" font-weight="500" text-anchor="middle" stroke="#fcfcfc" stroke-width="2.6" stroke-linejoin="round" paint-order="stroke">孟加拉国</text>
<text x="174.5" y="819" font-size="13" fill="#3c3c3c" font-weight="500" text-anchor="middle" stroke="#fcfcfc" stroke-width="2.6" stroke-linejoin="round" paint-order="stroke">缅甸</text>
<text x="280" y="846" font-size="13" fill="#3c3c3c" font-weight="500" text-anchor="middle" stroke="#fcfcfc" stroke-width="2.6" stroke-linejoin="round" paint-order="stroke">老挝</text>
<path d="M569.1 651 L455.6 801.2" stroke="#0c8a12" stroke-width="4.6" stroke-linecap="butt" opacity=".96"/>
<g transform="translate(569.1 651.2)"><ellipse cx="9.5" cy="-5.6" rx="4.6" ry="2.4" fill="#1c3a52" opacity=".5" transform="rotate(-8 9.5 -5.6)"/><path d="M0 0C-2.6 -5.8 -10.3 -9.2 -10.3 -16.2A10.3 10.3 0 0 1 10.3 -16.2C10.3 -9.2 2.6 -5.8 0 0Z" fill="#ec2b2f" stroke="#d3262f" stroke-width=".9"/><path d="M-7.6 -18.6C-6.8 -21.6 -4.6 -23.6 -1.8 -24.4" fill="none" stroke="#f68a8a" stroke-width="1.3" stroke-linecap="round" opacity=".8"/></g>
<g transform="translate(455.6 801.3)"><ellipse cx="9.5" cy="-5.6" rx="4.6" ry="2.4" fill="#1c3a52" opacity=".5" transform="rotate(-8 9.5 -5.6)"/><path d="M0 0C-2.6 -5.8 -10.3 -9.2 -10.3 -16.2A10.3 10.3 0 0 1 10.3 -16.2C10.3 -9.2 2.6 -5.8 0 0Z" fill="#ec2b2f" stroke="#d3262f" stroke-width=".9"/><path d="M-7.6 -18.6C-6.8 -21.6 -4.6 -23.6 -1.8 -24.4" fill="none" stroke="#f68a8a" stroke-width="1.3" stroke-linecap="round" opacity=".8"/></g>
<rect x="485.3" y="716.5" width="60" height="28" rx="4" fill="#000" opacity=".18"/>
<rect x="483.5" y="714.5" width="59.8" height="27.5" rx="4" fill="#fff" fill-opacity=".93" stroke="#e0454c" stroke-width="1.2"/>
<text x="513.8" y="733" font-size="13.6" fill="#222" text-anchor="middle" textLength="46.5" lengthAdjust="spacingAndGlyphs">1223km</text>
<path d="M556 869 L560 865 L566 863.5 L572 865.5 L577 864 L581 868 L581 890 L556 890Z" fill="#f9f9f8"/>
<path d="M107 604.6 V610.5 H184 V604.6" fill="none" stroke="#000" stroke-width="2.8"/>
<text x="145.3" y="603" font-size="11.6" font-weight="bold" fill="#333" text-anchor="middle" stroke="#fff" stroke-width="2.4" stroke-linejoin="round" paint-order="stroke">500 <tspan font-size="12" font-weight="500">公里</tspan></text>
<defs><linearGradient id="pg" x1="0" y1="0" x2="0" y2="1"><stop offset="0" stop-color="#fff"/><stop offset="1" stop-color="#ececec"/></linearGradient></defs>
<circle cx="50.3" cy="601.8" r="21.6" fill="url(#pg)" stroke="#9c9c9c" stroke-width="1"/>
<path d="M45.3 590 L50.3 585 L55.3 590 M39 596.5 L34 601.8 L39 607 M61.5 596.5 L66.5 601.8 L61.5 607 M45.3 613 L50.3 618 L55.3 613" fill="none" stroke="#4674dc" stroke-width="2.6" stroke-linecap="round" stroke-linejoin="round"/>
<rect x="47.3" y="648" width="6.2" height="99" fill="#ededed" stroke="#b4b4b4" stroke-width="1"/>
<path d="M47.8 652 h5.2 M47.8 658 h5.2 M47.8 664 h5.2 M47.8 670 h5.2 M47.8 676 h5.2 M47.8 682 h5.2 M47.8 688 h5.2 M47.8 694 h5.2 M47.8 700 h5.2 M47.8 706 h5.2 M47.8 712 h5.2 M47.8 718 h5.2 M47.8 724 h5.2 M47.8 730 h5.2 M47.8 736 h5.2 M47.8 742 h5.2" stroke="#c9c9c9" stroke-width="1" fill="none"/>
<rect x="48.3" y="756" width="4.4" height="9" fill="#6f9fee" stroke="#b4b4b4" stroke-width=".6"/>
<rect x="42" y="632" width="18.8" height="18.5" rx="2" fill="#000" opacity=".18"/>
<rect x="40.8" y="630.5" width="18.8" height="18.3" rx="2" fill="#fdfdfd" stroke="#a8a8a8" stroke-width="1"/>
<path d="M46.5 639.6 h7.6 M50.3 635.8 v7.6" stroke="#3d6fdc" stroke-width="1.8"/>
<rect x="42" y="766" width="18.8" height="18.8" rx="2" fill="#000" opacity=".18"/>
<rect x="40.8" y="764.5" width="18.8" height="18.8" rx="2" fill="#fdfdfd" stroke="#a8a8a8" stroke-width="1"/>
<path d="M46.5 773.8 h7.6" stroke="#3d6fdc" stroke-width="1.8"/>
<rect x="41" y="745.5" width="18.6" height="10" rx="2" fill="#fdfdfd" stroke="#a8a8a8" stroke-width="1"/>
<path d="M45.5 750.5 h9.6" stroke="#3d6fdc" stroke-width="1.8"/>
<g stroke="#fff" stroke-width="3.2" stroke-linejoin="round" paint-order="stroke">
<text x="19.3" y="856" font-size="16.5" font-weight="bold" fill="#e10a0a" textLength="27.8" lengthAdjust="spacingAndGlyphs">Bai</text>
<text x="71.8" y="855.8" font-size="12.6" font-weight="bold" fill="#e10a0a" font-family="'Noto Sans CJK SC',sans-serif">地图</text>
<g fill="#2a1fe0" transform="translate(58.4 848) scale(1.1) translate(-58.4 -848)"><ellipse cx="49.2" cy="842.2" rx="2.5" ry="3.4" transform="rotate(-18 49.2 842.2)"/><ellipse cx="55.4" cy="836.8" rx="2.7" ry="3.7" transform="rotate(-6 55.4 836.8)"/><ellipse cx="62.8" cy="836.8" rx="2.7" ry="3.7" transform="rotate(6 62.8 836.8)"/><ellipse cx="67.8" cy="843.4" rx="2.5" ry="3.4" transform="rotate(18 67.8 843.4)"/><path d="M58.4 842.5C62.5 842.5 67.6 848 67.6 852.6C67.6 857 63 858.5 58.4 858.5C53.8 858.5 49.2 857 49.2 852.6C49.2 848 54.3 842.5 58.4 842.5Z"/></g>
</g>
<text x="58.4" y="855.5" font-size="10.5" font-weight="bold" fill="#fff" text-anchor="middle" letter-spacing="-.4">du</text>
<rect x="903.5" y="580.5" width="97" height="35" fill="#fff" stroke="#a0a0a0" stroke-width="1"/>
<text x="952" y="604.6" font-size="18" fill="#222" text-anchor="middle">全屏显示</text>
</svg>
<svg class="abs" style="left:829.5px;top:149.5px" width="169" height="166" viewBox="843.5 718.2 169 166" font-family="'Liberation Sans','Noto Sans CJK SC',sans-serif">
<rect x="844" y="718" width="170" height="170" fill="#fff" stroke="#8f8f8f" stroke-width="1"/>
<rect x="850.8" y="724.5" width="161" height="165" fill="#a1d6fa" stroke="#8f8f8f" stroke-width="1"/>
<clipPath id="ovc"><rect x="851.3" y="725" width="160" height="160"/></clipPath><g clip-path="url(#ovc)">
<path d="M851 724 L854 724.1 L857 724.2 L860.1 724 L862.7 724.2 L866.2 723.8 L869.5 724.4 L872.3 723.8 L875.3 723.7 L878 724.1 L881 724.1 L884.5 723.7 L887.7 723.8 L890.8 724.5 L893.6 723.8 L896.7 724.1 L900.2 723.9 L903.1 724.8 L906 724.6 L908.5 724.8 L911.9 724.8 L915.3 724 L918.3 724.8 L920.6 724.2 L924.3 724 L927.5 724.2 L930.5 724 L933.2 724.8 L935.9 724.2 L939.3 724.3 L941.8 724.2 L945 724.9 L948.4 724.5 L946.8 727.8 L944.6 730.6 L943.2 733.2 L944.4 736.3 L946.3 739.4 L950.4 743.5 L952.1 746.5 L953.5 749.7 L955.4 752.9 L956.6 756 L959.3 758.9 L961.8 761.1 L960.8 766.3 L958.3 769.4 L956.6 771.5 L959.3 773.4 L961.8 775.6 L964.9 778.8 L960.8 782.9 L961.1 785.8 L960.8 789.1 L959.2 792.3 L956.6 795.3 L954.4 798.7 L952.5 801.6 L949.3 803.3 L946.3 805.7 L945.5 809.4 L944.2 814 L942.5 816.9 L940.1 820.2 L938.1 823.3 L935.9 825.4 L932.9 827.6 L929.7 829.5 L926.4 831.6 L923.5 834.7 L920.3 835.7 L918.1 837.4 L915.2 838.9 L911.1 840.8 L906.9 842 L902.4 842.2 L898.6 843 L895.7 843.6 L892.4 845.1 L889.1 846.3 L886.5 847.7 L884.1 849.2 L880.7 850.8 L877.9 852.3 L874.8 850.3 L871.3 852.3 L872.4 855.1 L873.3 858.5 L870.6 859.6 L868.6 854.4 L865.5 850.3 L861.5 849.2 L857.2 848.2 L853.7 849.1 L850.9 849.2Z" fill="#f9f9f8"/>
<path d="M960.8 819.2 L962.9 822.3 L961.8 828.5 L958.7 836.8 L954.6 845.1 L952.5 843 L949.4 836.8 L949.4 830.6 L952.5 824.4 L956.6 820.2Z" fill="#f9f9f8"/>
<path d="M998.1 724.5 L996 733.2 L995 738.3 L1000.2 737.3 L1006.4 735.2 L1010.5 731.1 L1012.6 724.5Z" fill="#f9f9f8"/>
<ellipse cx="997.7" cy="748" rx="3.4" ry="1.6" fill="#f9f9f8" transform="rotate(-12 997.7 748)"/>
<path d="M868.6 865.8 L870.6 861.7 L874.8 860.6 L877.9 863.7 L878.3 872 L875.8 880.3 L870.6 883 L866.5 876.2Z" fill="#f9f9f8"/>
<path d="M952 868 L956 866 L962 867 L966 871 L966 886 L950 886Z" fill="#f9f9f8"/>
<circle cx="974" cy="814" r="1" fill="#f9f9f8"/>
<circle cx="982.5" cy="813" r="1" fill="#f9f9f8"/>
<circle cx="1008" cy="808" r="1.4" fill="#f9f9f8"/>
<circle cx="923" cy="856" r="1" fill="#f9f9f8"/>
<path d="M874.8 724.9 L872.7 731.1 L873.7 735.2 L875.8 736.3 L880.8 736 L886.2 736.3 L891 735.4 L896.5 734.2 L902 733.9 L906.9 733.2 L911 729 L917.3 724.5" fill="none" stroke="#a3d6fb" stroke-width="1.3" stroke-linejoin="round"/>
<path d="M850.9 779.8 L855.1 774.6 L860.3 770.5 L867.5 768.4 L871.6 768.7 L875.8 769.4 L882 773.6 L886.2 775.6 L890.3 778.8 L895.5 781.9 L900.7 776.7 L905.9 772.5 L911 775.6 L916.2 779.8 L922.4 777.7 L927.6 772.5 L931.8 768.4 L934 765.4 L937 762.2 L941.1 759.1 L946.3 758 L951.5 760.1 L956.6 761.1 L961.8 762.2" fill="none" stroke="#a3d6fb" stroke-width="1.3" stroke-linejoin="round"/>
<path d="M969 823.5 L968.5 832.5" stroke="#c9b873" stroke-width="2.2" stroke-linecap="round"/>
<path d="M962.8 847.7 L956.8 855.3" stroke="#c9b873" stroke-width="2.2" stroke-linecap="round"/>
<path d="M948.3 869 L944.3 878" stroke="#c9b873" stroke-width="2.2" stroke-linecap="round"/>
<path d="M851 848 L857 849.5" stroke="#c9b873" stroke-width="2.2"/>
<text x="852" y="727.6" font-size="10" font-weight="bold" fill="#e23b3b" textLength="28" lengthAdjust="spacingAndGlyphs">中华人民共和国</text>
</g>
</svg>
 </div>
</div>

<!-- copyright strip (inside map) -->
<div class="abs" style="left:267px;top:867px;width:403px;height:16px;background:rgba(255,255,255,.72);overflow:hidden">
 <div class="abs" style="right:0.5px;top:0;height:16px;line-height:17px;font-size:12.3px;color:#34343e;white-space:pre">© 2018 Baidu - GS(2016)2089号 - 甲测资字1100930 - 京ICP证030173号 - Data © 长地万方 &amp; <span style="color:#6464d2;text-decoration:underline">OpenStreetMap</span> &amp; <span style="color:#6464d2;text-decoration:underline">HERE</span></div>
</div>

<!-- translucent taskbar -->
<div class="abs" style="left:267px;top:856px;width:757px;height:27px;background:rgba(255,255,255,.2)"></div>
<div class="abs" style="left:731px;top:856px;width:54px;height:27px;background:rgba(255,255,255,.5)"></div>
<svg class="abs" style="left:267px;top:856px" width="757" height="27" viewBox="267 856 757 27">
 <!-- task view -->
 <path d="M287.5 874.5h10.5v9h-10.5zM287.5 877.5h10.5" fill="none" stroke="#111" stroke-width="1.3"/><path d="M301.5 873v10" stroke="#111" stroke-width="1.6"/>
 <!-- misc icons -->
 <path d="M520 883v-9l5-6 8-2 3 4v13z" fill="#d9c8a2"/><path d="M523 883l4-4 7 1 2 3z" fill="#a9855a"/>
 <path d="M536 883v-15l4-2 1 5 4 3 3 6v3z" fill="#1a1a1a"/><path d="M536.5 867h3.5v8h-3.5z" fill="#2b7de0"/><ellipse cx="542.5" cy="880" rx="3.2" ry="3.5" fill="#fff"/><path d="M538 875.5c2-1.6 6-1.6 9 .6l-.5 1.8c-2.6-1.4-5.6-1.6-8.2-.6z" fill="#e02424"/>
 <rect x="585.6" y="868.8" width="14.2" height="10.5" fill="#4fa6ea"/><rect x="581" y="875" width="15" height="8" fill="#0b0b0b"/>
 <rect x="633" y="868" width="24.5" height="15" fill="#0c0c0c"/><rect x="633" y="868" width="24.5" height="2.2" fill="#8d8d8d"/><path d="M636 872.5h2M639.5 872.5l3 2.2M643 875h4.5" stroke="#e8e8e8" stroke-width="1.1" fill="none"/>
 <!-- telegram -->
 <circle cx="701.5" cy="877.8" r="12.1" fill="#2ea3dc"/><path d="M693.5 879.2l14.5-6.2-2.6 12.5-4.2-3.6-2.2 2.4-.4-4.2 6.2-5.4-8 4.8z" fill="#fff"/>
 <!-- map app -->
 <rect x="743.8" y="864.8" width="27.2" height="20" fill="#1b8ddb"/><path d="M746 871l6-2.5 6.5 2.5 6.5-2.8 4 1.6v14h-23z" fill="#f6f1e6"/><path d="M758.5 871v13" stroke="#ddd5c2" stroke-width="1"/>
 <circle cx="764.3" cy="873.4" r="2.3" fill="#e03434"/><path d="M762.6 875l1.7 3.4 1.7-3.4z" fill="#e03434"/><circle cx="748.3" cy="879.8" r="2.2" fill="#e03434"/><path d="M746.7 881.3l1.6 3 1.6-3z" fill="#e03434"/>
 <!-- notepad -->
 <path d="M808 868.5l14.5 0 2.5 14.5h-24.5z" fill="#9fd6ea"/><path d="M808.5 867.2h14l.6 2.6h-15.4z" fill="#8d8d8d"/><path d="M822.5 868.5l2 0 1.5 14.5h-1.5z" fill="#e7e2d4"/>
 <!-- word -->
 <rect x="860" y="866.2" width="21.5" height="17" rx="1.5" fill="#41a5ee"/><rect x="860" y="872" width="21.5" height="5.5" fill="#2b7cd3"/><rect x="860" y="877.5" width="21.5" height="6" fill="#185abd"/>
 <rect x="854.8" y="871.3" width="13" height="12" rx="1" fill="#185abd"/><text x="861.3" y="882.6" font-family="'Liberation Sans',sans-serif" font-size="10.5" font-weight="bold" fill="#fff" text-anchor="middle">W</text>
 <!-- folder -->
 <path d="M912 867.8h8.6l1.6 2h15v13.5h-25.2z" fill="#e8a816"/><rect x="912" y="870.6" width="25.2" height="13" fill="#fbd563"/><rect x="917.5" y="877.5" width="14" height="6" fill="#3a8ee6"/><rect x="920" y="880" width="9" height="3.5" fill="#f7cf4e"/>
 <!-- overview collapse arrow -->
 <rect x="997.7" y="871.2" width="14" height="12" fill="#fff" stroke="#cfcfcf" stroke-width=".8"/><path d="M1001 874.5l7 7M1008.2 876.5v5.2h-5.2" fill="none" stroke="#8a8a8a" stroke-width="1.5"/>
</svg>

<!-- search box -->
<div class="abs" style="left:0;top:856px;width:267px;height:27px;background:#fff;border-top:1px solid #a5a5a5;border-right:1px solid #d0d0d0;overflow:hidden">
 <div class="abs" style="left:-8.8px;top:11.5px;font-size:16.8px;line-height:20px;color:#3b3b3b;white-space:pre;letter-spacing:.05px">入 你要搜索的内容</div>
</div>
<!-- left desktop sliver -->
<div class="abs" style="left:0;top:242px;width:2px;height:614px;background:#0c0c0c"></div>
<div class="abs" style="left:0;top:660px;width:1.5px;height:10px;background:#2b6cb8"></div>
<div class="abs" style="left:0;top:774px;width:1.5px;height:3px;background:#3a6ea8"></div>
<div class="abs" style="left:1023px;top:276px;width:1px;height:580px;background:#dedede"></div>

</body>
</html>
